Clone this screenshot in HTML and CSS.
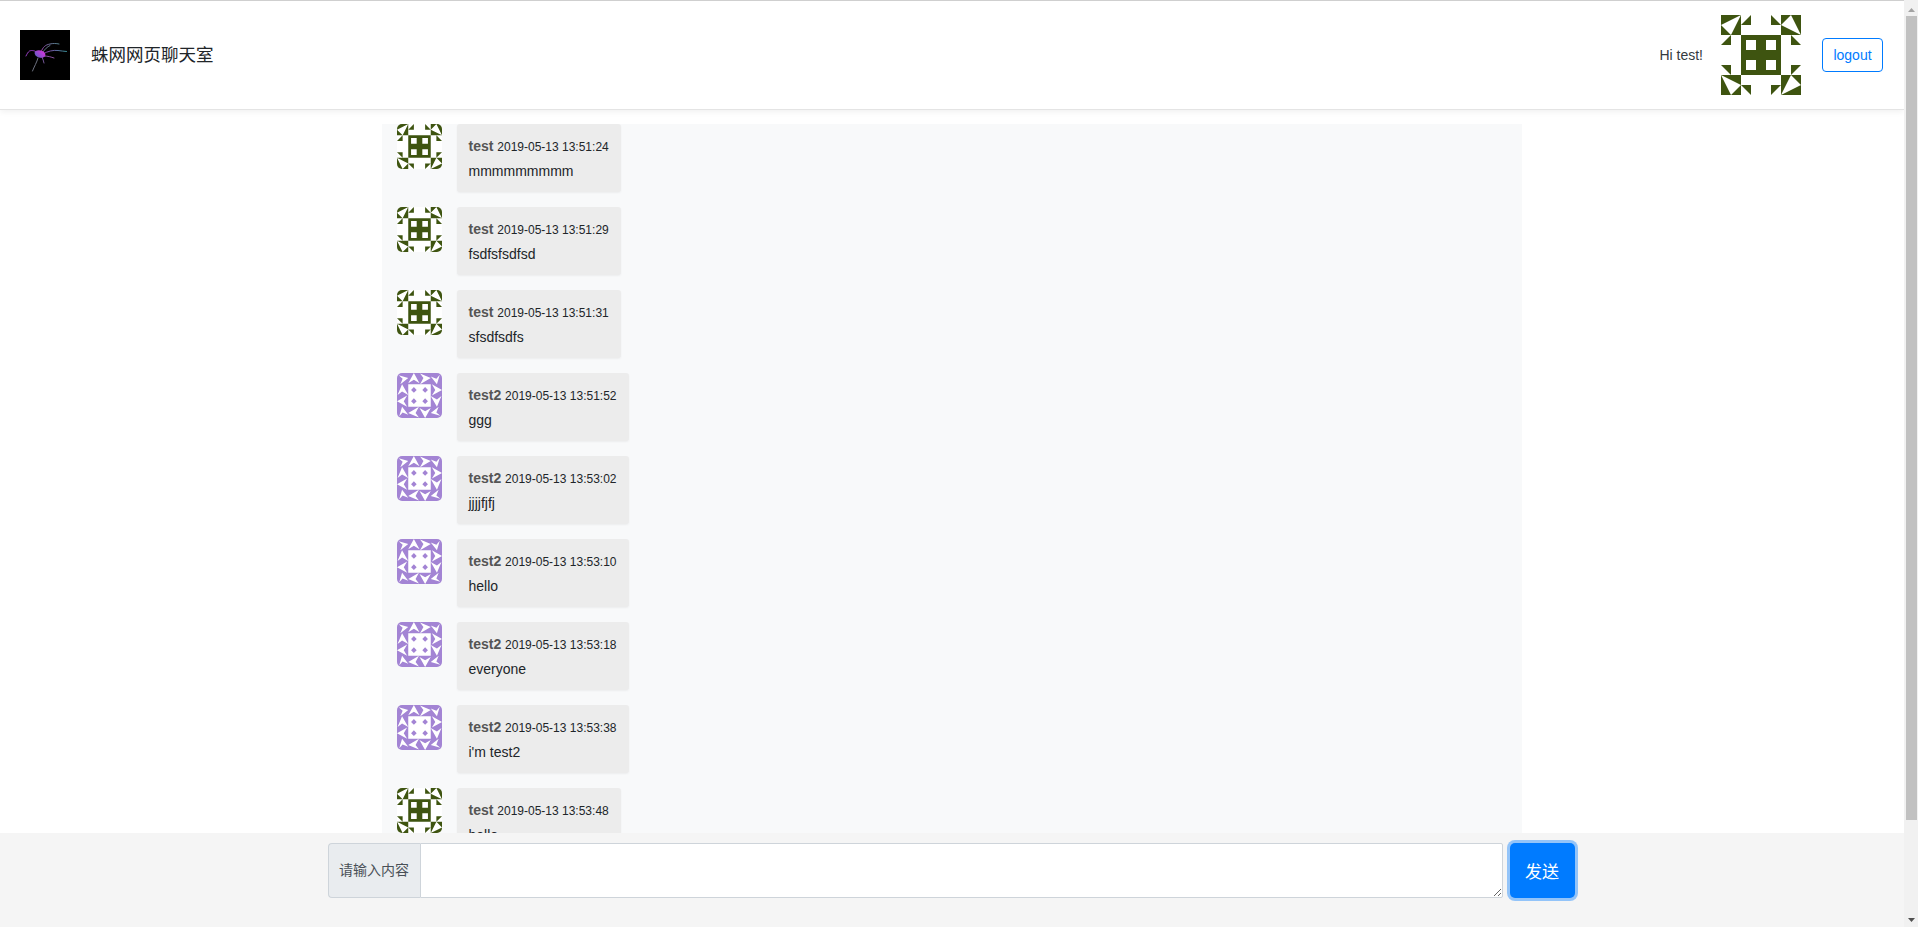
FILE: index.html
```html
<!DOCTYPE html>
<html lang="zh">
<head>
<meta charset="utf-8">
<title>蛛网网页聊天室</title>
<link rel="stylesheet" href="styles.css">
</head>
<body>
<svg class="defs" aria-hidden="true">
  <defs>
    <linearGradient id="leg-a" x1="0" y1="1" x2="1" y2="0"><stop offset="0" stop-color="#c040d0"/><stop offset="1" stop-color="#5a9098"/></linearGradient>
    <linearGradient id="leg-b" x1="0" y1="0" x2="1" y2="0"><stop offset="0" stop-color="#a040c0"/><stop offset="1" stop-color="#40a0a8"/></linearGradient>
    <linearGradient id="spider-body" x1="0" y1="1" x2="1" y2="0"><stop offset="0" stop-color="#5560c0"/><stop offset="0.45" stop-color="#9a48d0"/><stop offset="1" stop-color="#e030e0"/></linearGradient>
    <g id="green-side">
      <path d="M0 0H20V20H0ZM0 10L10 20L20 0Z" fill-rule="evenodd"/>
      <path d="M20 10L30 0V10Z"/>
      <path d="M0 30L10 20V30Z"/>
    </g>
    <symbol id="av-green" viewBox="0 0 80 80">
      <rect width="80" height="80" fill="#fff"/>
      <g fill="#3e5410">
        <use href="#green-side"/>
        <use href="#green-side" transform="rotate(90 40 40)"/>
        <use href="#green-side" transform="rotate(180 40 40)"/>
        <use href="#green-side" transform="rotate(270 40 40)"/>
        <path fill-rule="evenodd" d="M20 20H60V60H20ZM25 25V35H35V25ZM45 25V35H55V25ZM25 45V55H35V45ZM45 45V55H55V45Z"/>
      </g>
    </symbol>
    <g id="purple-side">
      <path d="M3 4L20 9L6 20L10 10Z"/>
      <path d="M30 0L40 18L30 12L20 18Z"/>
      <path d="M41 1L60 9L41 20L47 9Z"/>
    </g>
    <symbol id="av-purple" viewBox="0 0 80 80">
      <rect width="80" height="80" fill="#a384d4"/>
      <g fill="#fff">
        <use href="#purple-side"/>
        <use href="#purple-side" transform="rotate(90 40 40)"/>
        <use href="#purple-side" transform="rotate(180 40 40)"/>
        <use href="#purple-side" transform="rotate(270 40 40)"/>
        <rect x="20" y="20" width="40" height="40"/>
      </g>
      <path fill="#a384d4" d="M30 25L35 30L30 35L25 30ZM50 25L55 30L50 35L45 30ZM30 45L35 50L30 55L25 50ZM50 45L55 50L50 55L45 50Z"/>
    </symbol>
  </defs>
</svg>

<div class="page">
  <header class="topbar">
    <div class="brand">
      <svg class="logo" viewBox="0 0 50 50" role="img" aria-label="logo">
        <rect width="50" height="50" fill="#000"/>
        <g fill="none" stroke-width="0.9" stroke-linecap="round">
          <path stroke="url(#leg-a)" d="M21 22C23 17 25 15 30 14C33 13.300 36 13.300 39 14"/>
          <path stroke="#6e7f98" d="M23 22C25 19 27 17 30 15.500"/>
          <path stroke="url(#leg-b)" d="M23 24C28 21 33 20 38 20.500C41 20.700 44 21.500 46.500 21.500"/>
          <path stroke="#a845d8" d="M18 23C15 20.500 12 20 9.500 21C8 22 7 24 6 26"/>
          <path stroke="#7a7f90" d="M18 28C17 32 14 37 12.500 41"/>
          <path stroke="#9a5ab0" d="M24 26C28 26 31 27 34 28"/>
          <path stroke="#8060a8" d="M22 27C23 29 23.500 31 24 33"/>
        </g>
        <ellipse cx="20" cy="24" rx="5.500" ry="3.500" fill="url(#spider-body)" transform="rotate(15 20 24)"/>
      </svg>
      <span class="brand-title">蛛网网页聊天室</span>
    </div>
    <div class="user">
      <span class="user-hi">Hi test!</span>
      <svg class="user-avatar"><use href="#av-green"/></svg>
      <a class="logout" href="#">logout</a>
    </div>
  </header>

  <div class="scroller">
    <main class="chat">
      <article class="msg">
        <svg class="msg-avatar"><use href="#av-green"/></svg>
        <div class="bubble"><div class="bubble-head"><b class="name">test</b> <span class="time">2019-05-13 13:51:24</span></div><div class="bubble-text">mmmmmmmmm</div></div>
      </article>
      <article class="msg">
        <svg class="msg-avatar"><use href="#av-green"/></svg>
        <div class="bubble"><div class="bubble-head"><b class="name">test</b> <span class="time">2019-05-13 13:51:29</span></div><div class="bubble-text">fsdfsfsdfsd</div></div>
      </article>
      <article class="msg">
        <svg class="msg-avatar"><use href="#av-green"/></svg>
        <div class="bubble"><div class="bubble-head"><b class="name">test</b> <span class="time">2019-05-13 13:51:31</span></div><div class="bubble-text">sfsdfsdfs</div></div>
      </article>
      <article class="msg">
        <svg class="msg-avatar"><use href="#av-purple"/></svg>
        <div class="bubble"><div class="bubble-head"><b class="name">test2</b> <span class="time">2019-05-13 13:51:52</span></div><div class="bubble-text">ggg</div></div>
      </article>
      <article class="msg">
        <svg class="msg-avatar"><use href="#av-purple"/></svg>
        <div class="bubble"><div class="bubble-head"><b class="name">test2</b> <span class="time">2019-05-13 13:53:02</span></div><div class="bubble-text">jjjjfjfj</div></div>
      </article>
      <article class="msg">
        <svg class="msg-avatar"><use href="#av-purple"/></svg>
        <div class="bubble"><div class="bubble-head"><b class="name">test2</b> <span class="time">2019-05-13 13:53:10</span></div><div class="bubble-text">hello</div></div>
      </article>
      <article class="msg">
        <svg class="msg-avatar"><use href="#av-purple"/></svg>
        <div class="bubble"><div class="bubble-head"><b class="name">test2</b> <span class="time">2019-05-13 13:53:18</span></div><div class="bubble-text">everyone</div></div>
      </article>
      <article class="msg">
        <svg class="msg-avatar"><use href="#av-purple"/></svg>
        <div class="bubble"><div class="bubble-head"><b class="name">test2</b> <span class="time">2019-05-13 13:53:38</span></div><div class="bubble-text">i'm test2</div></div>
      </article>
      <article class="msg">
        <svg class="msg-avatar"><use href="#av-green"/></svg>
        <div class="bubble"><div class="bubble-head"><b class="name">test</b> <span class="time">2019-05-13 13:53:48</span></div><div class="bubble-text">hello</div></div>
      </article>
    </main>
  </div>

  <footer class="composer">
    <div class="composer-inner">
      <label class="composer-label" for="msg-input">请输入内容</label>
      <textarea class="composer-input" id="msg-input"></textarea>
      <button class="composer-send" type="button">发送</button>
    </div>
  </footer>
</div>

<div class="scrollbar" aria-hidden="true">
  <svg class="scrollbar-arrow" viewBox="0 0 14 16"><path d="M7.500 8L11 12H4Z" fill="#a3a3a3"/></svg>
  <div class="scrollbar-track"><div class="scrollbar-thumb"></div></div>
  <svg class="scrollbar-arrow" viewBox="0 0 14 16"><path d="M7.500 11L4 7H11Z" fill="#505050"/></svg>
</div>
</body>
</html>
```

FILE: styles.css
```css
* { box-sizing: border-box; }

html,
body {
  height: 100%;
}

body {
  display: flex;
  margin: 0;
  overflow: hidden;
  background: #fff;
  color: #212529;
  font-family: "Liberation Sans", "Noto Sans CJK SC", sans-serif;
  font-size: 14px;
  line-height: 21px;
}

.defs {
  position: absolute;
  width: 0;
  height: 0;
}

.page {
  display: flex;
  flex: 1;
  flex-direction: column;
  min-width: 0;
}

.scrollbar {
  display: flex;
  flex: none;
  flex-direction: column;
  width: 14px;
  background: #f1f1f1;
}

.scrollbar-arrow {
  display: block;
  flex: none;
  width: 14px;
  height: 16px;
}

.scrollbar-track {
  flex: 1;
  min-height: 0;
}

.scrollbar-thumb {
  height: 804px;
  margin: 0 1px 0 2px;
  background: #c1c1c1;
}

.topbar {
  display: flex;
  flex: none;
  align-items: center;
  justify-content: space-between;
  height: 110px;
  padding: 0 21px 0 20px;
  border-top: 1px solid #cfcfcf;
  border-bottom: 1px solid #e4e4e4;
  box-shadow: 0 2px 6px rgba(0, 0, 0, 0.06);
}

.brand {
  display: flex;
  align-items: center;
  gap: 21px;
}

.logo {
  display: block;
  width: 50px;
  height: 50px;
}

.brand-title {
  font-size: 17.500px;
  color: #212529;
}

.user {
  display: flex;
  align-items: center;
}

.user-hi {
  margin-right: 18px;
  color: #343a40;
}

.user-avatar {
  display: block;
  width: 80px;
  height: 80px;
  margin-right: 21px;
}

.logout {
  display: block;
  width: 61px;
  height: 34px;
  border: 1px solid #007bff;
  border-radius: 4px;
  color: #007bff;
  line-height: 32px;
  text-align: center;
  text-decoration: none;
}

.scroller {
  flex: 1;
  min-height: 0;
  padding-top: 14px;
  overflow: hidden;
}

.chat {
  width: 1140px;
  margin: 0 auto;
  padding: 0 15px;
  background: #f8f9fa;
}

.msg {
  display: flex;
  align-items: flex-start;
  gap: 15px;
  margin-bottom: 15px;
}

.msg-avatar {
  display: block;
  flex: none;
  width: 45px;
  height: 45px;
  border-radius: 5px;
}

.bubble {
  padding: 11.500px 12px 10.500px 11.500px;
  border-radius: 3px;
  background: #ececec;
  box-shadow: 0 1px 2px rgba(0, 0, 0, 0.05);
}

.bubble-head {
  margin-bottom: 4px;
  white-space: nowrap;
}

.name {
  color: #555;
  font-weight: 700;
}

.time {
  font-size: 12px;
  line-height: 1;
}

.composer {
  flex: none;
  height: 94px;
  padding-top: 10px;
  background: #f5f5f5;
}

.composer-inner {
  display: flex;
  justify-content: center;
  align-items: flex-start;
  padding-right: 2px;
}

.composer-label {
  display: flex;
  align-items: center;
  justify-content: center;
  width: 92px;
  height: 55px;
  border: 1px solid #ced4da;
  border-right: 0;
  border-radius: 4px 0 0 4px;
  background: #e9ecef;
  color: #495057;
}

.composer-input {
  display: block;
  width: 1083px;
  height: 55px;
  border: 1px solid #ced4da;
  border-radius: 0 2px 2px 0;
  background: #fff;
  outline: none;
}

.composer-send {
  width: 65px;
  height: 55px;
  margin-left: 7px;
  border: 0;
  border-radius: 5px;
  background: #007bff;
  box-shadow: 0 0 0 3px rgba(0, 123, 255, 0.4);
  color: #fff;
  font-family: inherit;
  font-size: 17px;
}
```
